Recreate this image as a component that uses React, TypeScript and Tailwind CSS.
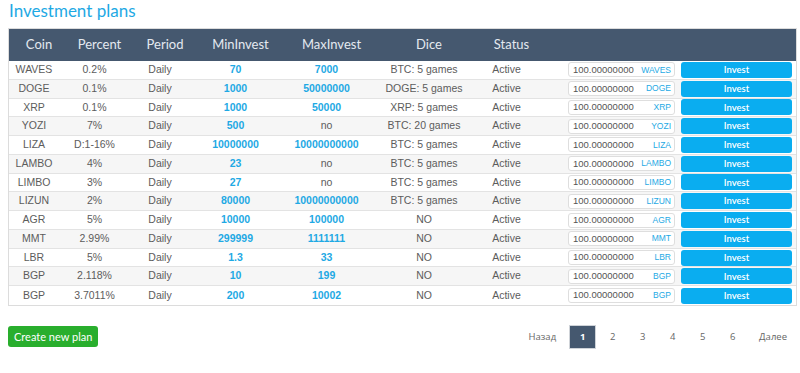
import React from "react";

type Plan = {
  coin: string;
  percent: string;
  min: string;
  max: string;
  dice: string;
};

const plans: Plan[] = [
  { coin: "WAVES", percent: "0.2%", min: "70", max: "7000", dice: "BTC: 5 games" },
  { coin: "DOGE", percent: "0.1%", min: "1000", max: "50000000", dice: "DOGE: 5 games" },
  { coin: "XRP", percent: "0.1%", min: "1000", max: "50000", dice: "XRP: 5 games" },
  { coin: "YOZI", percent: "7%", min: "500", max: "no", dice: "BTC: 20 games" },
  { coin: "LIZA", percent: "D:1-16%", min: "10000000", max: "10000000000", dice: "BTC: 5 games" },
  { coin: "LAMBO", percent: "4%", min: "23", max: "no", dice: "BTC: 5 games" },
  { coin: "LIMBO", percent: "3%", min: "27", max: "no", dice: "BTC: 5 games" },
  { coin: "LIZUN", percent: "2%", min: "80000", max: "10000000000", dice: "BTC: 5 games" },
  { coin: "AGR", percent: "5%", min: "10000", max: "100000", dice: "NO" },
  { coin: "MMT", percent: "2.99%", min: "299999", max: "1111111", dice: "NO" },
  { coin: "LBR", percent: "5%", min: "1.3", max: "33", dice: "NO" },
  { coin: "BGP", percent: "2.118%", min: "10", max: "199", dice: "NO" },
  { coin: "BGP", percent: "3.7011%", min: "200", max: "10002", dice: "NO" },
];

const cols = "grid grid-cols-[50px_71px_60px_91px_91px_104px_61px_1fr]";
const headers = ["Coin", "Percent", "Period", "MinInvest", "MaxInvest", "Dice", "Status", ""];

function Amount({ value }: { value: string }) {
  if (value === "no") return <span>no</span>;
  return <span className="font-bold text-[#1ea9e4]">{value}</span>;
}

export default function App() {
  return (
    <div className="w-[800px] h-[373px] bg-white pl-[8px] pr-[3px] font-['Liberation_Sans',Arial,sans-serif]">
      {/* Title */}
      <h1 className="h-[28px] pt-[1px] pl-[1px] text-[17px] leading-[20px] text-[#1ea9e4] font-['Lato','Open_Sans',sans-serif]">
        Investment plans
      </h1>

      {/* Plans table */}
      <div className="border border-[#dcdcdc]">
        <div className={`${cols} h-[32px] items-center bg-[#45586f] text-[13px] text-[#e4e9ef] font-['Lato','Open_Sans',sans-serif]`}>
          {headers.map((h, i) => (
            <div key={i} className="text-center pl-[10px]">
              {h}
            </div>
          ))}
        </div>

        {plans.map((p, i) => (
          <div
            key={i}
            className={`${cols} h-[18.77px] items-center text-[10.5px] text-[#5c5c5c] ${
              i < plans.length - 1 ? "border-b border-[#e3e3e3]" : ""
            } ${i % 2 === 1 ? "bg-[#f6f6f6]" : "bg-white"}`}
          >
            <div className="text-center">{p.coin}</div>
            <div className="text-center">{p.percent}</div>
            <div className="text-center">Daily</div>
            <div className="text-center">
              <Amount value={p.min} />
            </div>
            <div className="text-center">
              <Amount value={p.max} />
            </div>
            <div className="text-center">{p.dice}</div>
            <div className="text-center">Active</div>
            <div className="flex items-center gap-[6px] pl-[31px] pr-[4px]">
              <div className="flex items-center w-[107px] h-[15px] bg-white border border-[#dedede] rounded-[3px] pl-[4px] pr-[3px]">
                <input
                  readOnly
                  defaultValue="100.00000000"
                  className="flex-1 min-w-0 bg-transparent outline-none text-[9.5px] text-[#555]"
                />
                <span className="text-[8.5px] text-[#1ea9e4]">{p.coin}</span>
              </div>
              <button className="w-[111px] h-[16px] rounded-[3px] bg-[#0aadf0] text-white text-[9.5px] font-semibold leading-none font-['Lato','Open_Sans',sans-serif]">
                Invest
              </button>
            </div>
          </div>
        ))}
      </div>

      {/* Footer: create button + pagination */}
      <div className="flex items-center justify-between mt-[19px]">
        <button className="h-[21px] px-[6px] rounded-[3px] bg-[#29ae2d] text-white text-[11px] font-['Lato','Open_Sans',sans-serif]">
          Create new plan
        </button>

        <nav className="flex items-center gap-[3px] text-[9.5px] text-[#666] font-['Open_Sans','Lato',sans-serif]">
          <a className="px-[10px] h-[24px] flex items-center">Назад</a>
          {[1, 2, 3, 4, 5, 6].map((n) => (
            <a
              key={n}
              className={`w-[27px] h-[24px] flex items-center justify-center ${
                n === 1 ? "bg-[#45586f] text-white font-bold border border-[#cfd3d8]" : ""
              }`}
            >
              {n}
            </a>
          ))}
          <a className="px-[10px] h-[24px] flex items-center">Далее</a>
        </nav>
      </div>
    </div>
  );
}
